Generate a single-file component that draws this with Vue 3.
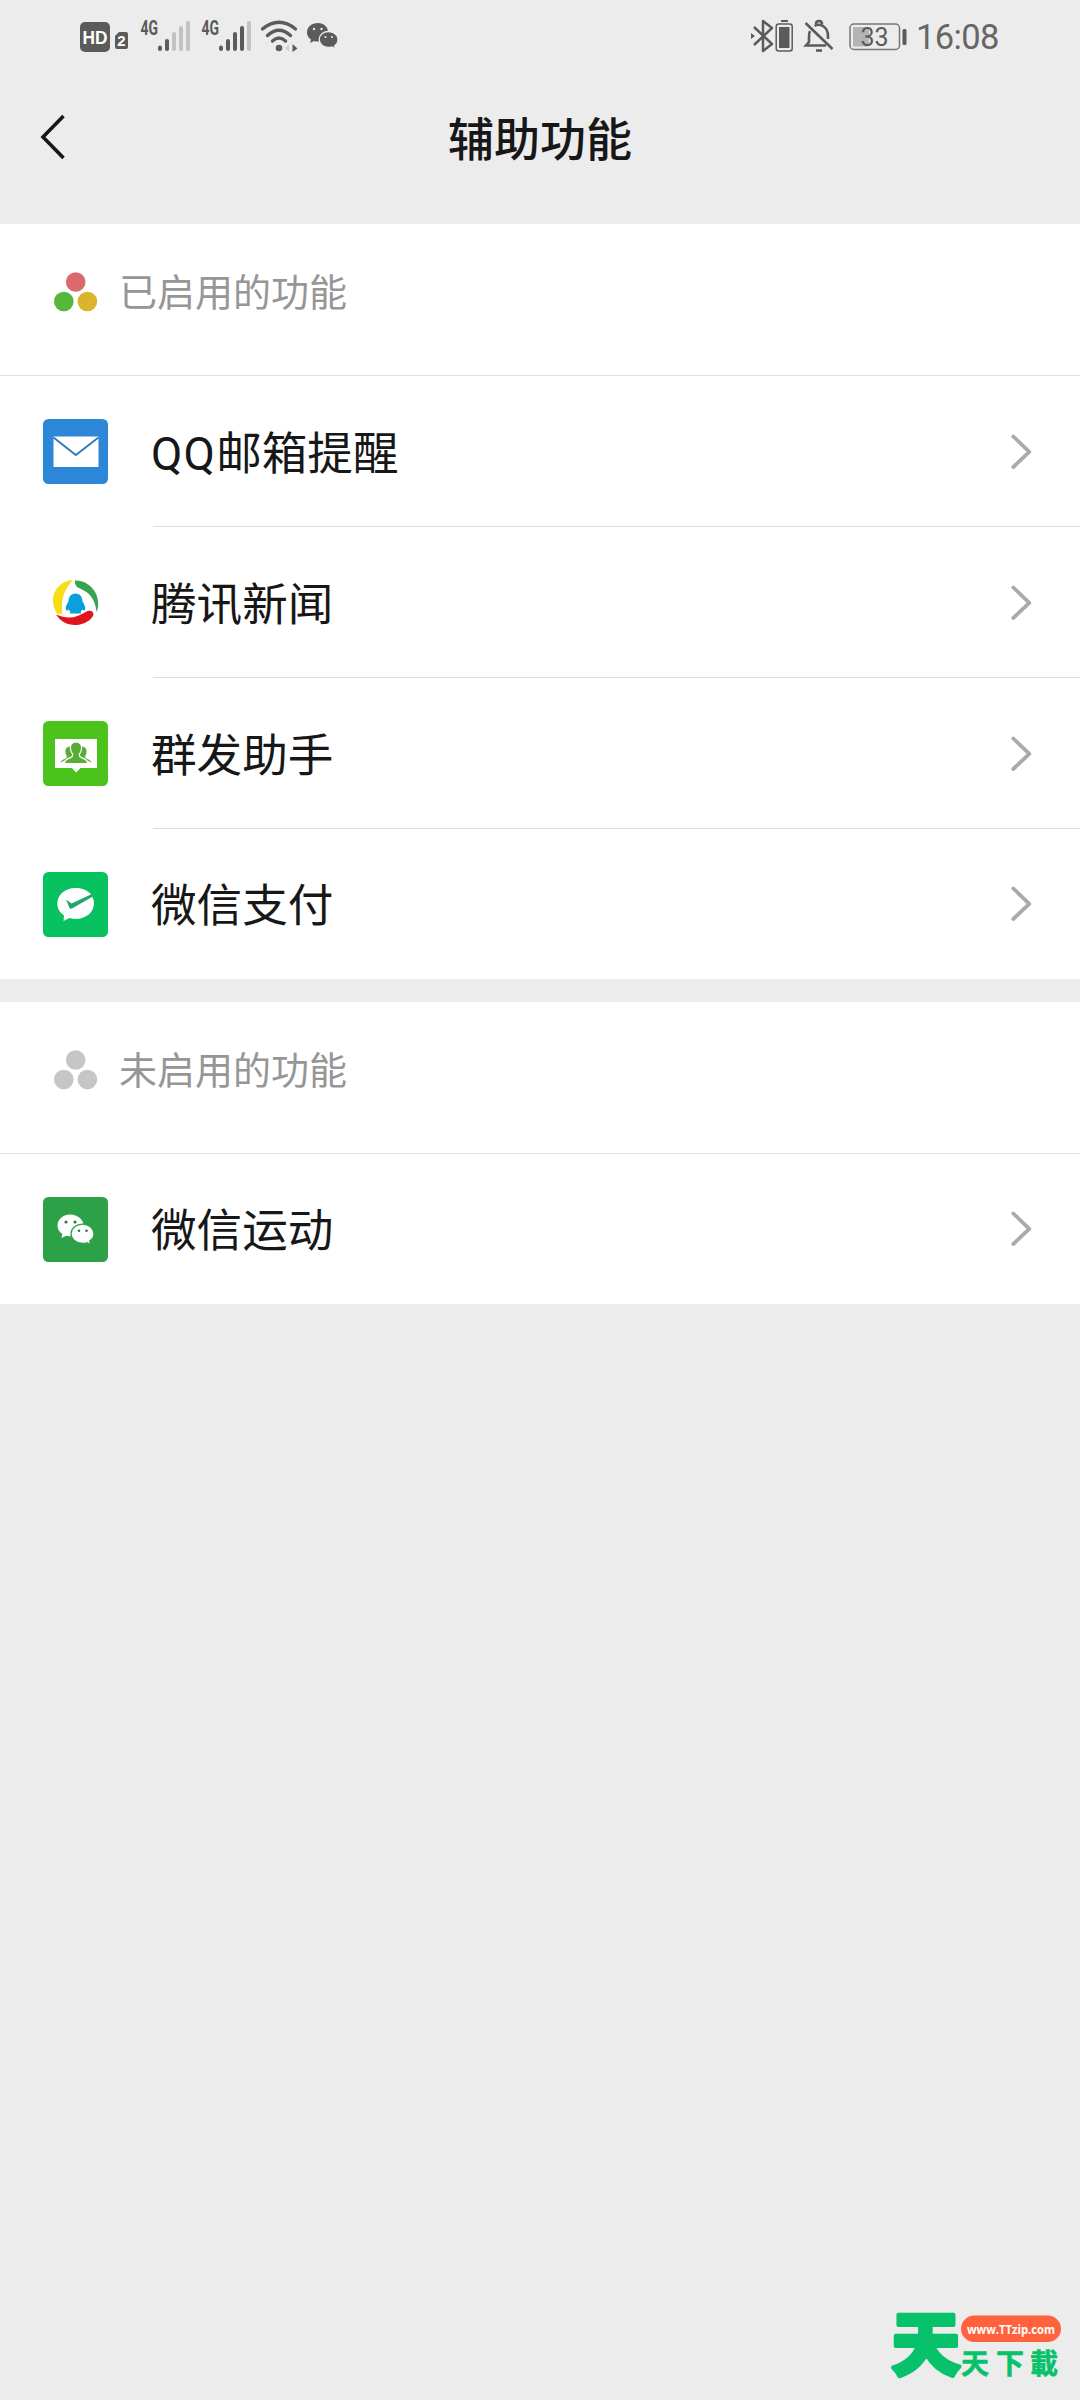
<script setup>
const enabled = [
  { id: 'mail', latin: 'QQ', label: '邮箱提醒' },
  { id: 'news', label: '腾讯新闻' },
  { id: 'group', label: '群发助手' },
  { id: 'pay', label: '微信支付' },
]
const disabled = [{ id: 'sport', label: '微信运动' }]
const sections = [
  { title: '已启用的功能', dots: ['#dc6a6c', '#55b83a', '#dbb42d'], items: enabled },
  { title: '未启用的功能', dots: ['#c6c6c6', '#c6c6c6', '#c6c6c6'], items: disabled },
]
const signals = [2, 4]
</script>

<template>
  <div class="page">
    <div class="status">
      <svg class="hd" width="50" height="32" viewBox="0 0 50 32">
        <rect x="0" y="2" width="30" height="30" rx="5" fill="#5b5b5b" />
        <text x="15" y="24" text-anchor="middle" class="hd-text" textLength="25" lengthAdjust="spacingAndGlyphs">HD</text>
        <path d="M35 16l4-4h7q2 0 2 2v13q0 2-2 2h-9q-2 0-2-2z" fill="#5b5b5b" />
        <text x="41.5" y="26" text-anchor="middle" class="sim-text">2</text>
      </svg>
      <svg v-for="n in signals" :key="n" class="signal" width="52" height="32" viewBox="0 0 52 32">
        <text x="0.5" y="14.500" class="net-text" textLength="17.5" lengthAdjust="spacingAndGlyphs">4G</text>
        <g stroke-width="4" stroke-linecap="round">
          <path v-for="b in 5" :key="b" :d="`M${13 + b * 7} 29V${[27.5, 21, 14, 8, 3][b - 1]}`" :stroke="b <= n ? '#5b5b5b' : '#c2c2c2'" />
        </g>
      </svg>
      <svg class="wifi" width="38" height="32" viewBox="0 0 38 32">
        <g fill="none" stroke="#5b5b5b" stroke-width="3.4" stroke-linecap="round">
          <path d="M2.500 9Q19 -4.500 35.500 9M7.500 15.500Q19 5 30.500 15.500M12.500 21Q19 15 25.500 21" />
        </g>
        <circle cx="19" cy="28" r="3.300" fill="#5b5b5b" />
        <path d="M32.500 24l5 4.500-5 3.500z" fill="#5b5b5b" />
        <path d="M29 24.500l-4 3.500 4 3.500z" fill="#cfcfcf" />
      </svg>
      <svg class="chat" width="32" height="32" viewBox="0 0 32 32">
        <path d="M11 3C4.500 3 0 7 0 12.500c0 3 1.500 5.500 4 7L3 23l4-2c1.500.4 3 .6 4.500.5C17 21 21 17 21 12 21 7 17 3 11 3z" fill="#5b5b5b" />
        <path d="M21.500 11.500c-5 0-9.300 3.500-9.300 8s4.300 8 9.300 8c1.300 0 2.500-.2 3.600-.6L28.500 29l-.8-3.200c2-1.400 3.300-3.600 3.300-6.300 0-4.500-4.500-8-9.500-8z" fill="#5b5b5b" stroke="#ececec" stroke-width="1.300" />
        <g fill="#ececec"><circle cx="7" cy="9" r="1.200" /><circle cx="14.500" cy="9" r="1.200" /><circle cx="18.500" cy="17" r="1" /><circle cx="25" cy="17" r="1" /></g>
      </svg>
      <span class="spacer"></span>
      <svg class="bt" width="42" height="32" viewBox="0 0 42 32">
        <path d="M3 7l18 17-9 7V1l9 7L3 25" fill="none" stroke="#5b5b5b" stroke-width="2.500" stroke-linejoin="round" />
        <path d="M0 13l4 3-4 3z" fill="#5b5b5b" />
        <rect x="25.200" y="4" width="16" height="27" rx="2.500" fill="none" stroke="#5b5b5b" stroke-width="1.500" />
        <rect x="28" y="7" width="10.500" height="21" fill="#5b5b5b" />
        <path d="M30 1h7" stroke="#5b5b5b" stroke-width="2" />
      </svg>
      <svg class="bell" width="30" height="32" viewBox="0 0 30 32">
        <g fill="none" stroke="#5b5b5b" stroke-width="2.600">
          <path d="M1.500 3L28.500 29" />
          <path d="M6 11Q5 13 5 17v5l-3 3.500h20M10.500 6Q14.500 3.500 19 6q5 3 5 10v3" />
          <path d="M12 4q0-3 3-3t3 3" />
          <path d="M12 30.500h6" />
        </g>
      </svg>
      <svg class="battery" width="58" height="32" viewBox="0 0 58 32">
        <rect x="1" y="4" width="49.500" height="25.500" rx="4" fill="none" stroke="#777" stroke-width="1.500" />
        <rect x="4" y="7" width="16" height="19.500" rx="1" fill="#b4b4b4" />
        <rect x="53.500" y="9" width="4" height="16" rx="1.500" fill="#5b5b5b" />
        <text x="25.500" y="25.500" text-anchor="middle" class="battery-text">33</text>
      </svg>
      <span class="clock">16:08</span>
    </div>

    <header class="nav">
      <svg class="back" width="28" height="50" viewBox="0 0 28 50">
        <path d="M25.500 4L5 25l20.500 21" fill="none" stroke="#171717" stroke-width="3.600" />
      </svg>
      <h1>辅助功能</h1>
    </header>

    <section v-for="s in sections" :key="s.title" class="group">
      <div class="head">
        <svg width="44" height="40" viewBox="0 0 44 40">
          <circle cx="21.700" cy="10" r="9.800" :fill="s.dots[0]" />
          <circle cx="9.800" cy="29.500" r="9.800" :fill="s.dots[1]" />
          <circle cx="33.400" cy="29.500" r="9.800" :fill="s.dots[2]" />
        </svg>
        <span>{{ s.title }}</span>
      </div>
      <div v-for="item in s.items" :key="item.id" class="row">
        <svg class="icon" width="65" height="65" viewBox="0 0 65 65">
          <template v-if="item.id === 'mail'">
            <rect width="65" height="65" rx="5.500" fill="#2d87d9" />
            <rect x="10.500" y="17.500" width="45" height="30.500" fill="#fff" />
            <path d="M10.500 18.500L32.800 36 55.500 18.500" fill="none" stroke="#2d78b5" stroke-width="1.800" />
          </template>
          <template v-else-if="item.id === 'news'">
            <path d="M30 10C17 11 9.500 21 10 32c.3 5 2 9 4.500 12l5-.5c-2-12 1-24 10.500-33.500z" fill="#f7dd13" />
            <path d="M32 10.500q-1 6 6 8.500c9 4 14.500 11 15.500 23 2.500-5 2.500-14-2-21C47 14 39 10 32 10.500z" fill="#38a450" />
            <path d="M13 44.500c5 8 14 12 24 10 7-1.500 12-5.500 13.500-10 0-4-4-5-8-2.500-9 6-18 7.500-29.500 2.500z" fill="#e1141e" />
            <path d="M32.500 23.500c-5 0-7 4-7 8-2 3-3.500 6-2.500 8.500.5 1 1.500.5 2.500-.5l2 2.500-1 1.500h12l-1-1.500 2-2.500c1 1 2 1.500 2.500.5.800-2.500-.5-5.500-2.500-8.500 0-4-2-8-7-8z" fill="#0aa0dc" />
          </template>
          <template v-else-if="item.id === 'group'">
            <rect width="65" height="65" rx="5.500" fill="#4cc31c" />
            <path d="M12 18h42v29H37.500L33 51.500 29 47H12z" fill="#fff" />
            <g fill="#58ad38">
              <path d="M28 25.500c-4-.5-6 2.500-5.500 6 .3 2 1 3 1.500 4.500-.5 1.500-3.500 2-6.500 4.500l1 .5 8-3.500 3-3zM38 25.500c4-.5 6 2.500 5.500 6-.3 2-1 3-1.500 4.500.5 1.500 3.500 2 6.500 4.500l-1 .5-8-3.500-3-3z" />
              <path d="M33 21c-4.200 0-6 3-5.500 7 .3 2.500 1 4 2.300 5.200 0 2-.3 2.500-2.300 3.300-3.500 1.500-6 2.500-6 6h23c0-3.500-2.500-4.500-6-6-2-.8-2.300-1.300-2.300-3.300 1.300-1.200 2-2.700 2.300-5.200.5-4-1.300-7-5.500-7z" stroke="#fff" stroke-width="1.200" />
            </g>
          </template>
          <template v-else-if="item.id === 'pay'">
            <rect width="65" height="65" rx="5.500" fill="#08c261" />
            <path d="M32.500 16C22 16 14.300 23 14.300 31.500c0 5 2.500 9 6.700 12L20.500 49l6-3c2 .6 4 1 6 1C43 47 51 40 51 31.500c0-2.500-.8-5-2-7z" fill="#fff" />
            <path d="M32.500 16c7 0 12.500 2.500 15.800 6.800L46 26l-16-9z" fill="#fff" />
            <path d="M23 27.500l5.500 4L49 22v3L29 36.500q-1.800 1-2.700-1z" fill="#22a668" />
          </template>
          <template v-else>
            <rect width="65" height="65" rx="5.500" fill="#2da148" />
            <path d="M27.500 17.500c-7.300 0-13 4.800-13 11 0 3.500 1.700 6.300 4.700 8.300L18.500 41l4.700-2.300q2.200.6 4.500.5C35 39 40.500 34.500 40.500 28.500s-6-11-13-11z" fill="#fff" />
            <path d="M39.500 27.200C33 27.200 28 31.500 28 36.800s5 9.500 11.500 9.500c1.500 0 3-.2 4.300-.6l3.500 1.800-.6-3.500c2.600-1.700 4.300-4.200 4.300-7.200 0-5.300-5-9.600-11.500-9.600z" fill="#fff" stroke="#2da148" stroke-width="1.200" />
            <g fill="#2d7d42"><circle cx="23" cy="25" r="1.600" /><circle cx="32" cy="25" r="1.600" /><circle cx="36" cy="33.700" r="1.300" /><circle cx="43.500" cy="33.700" r="1.300" /></g>
          </template>
        </svg>
        <span class="label"><span v-if="item.latin" class="latin">{{ item.latin }}</span>{{ item.label }}</span>
        <svg class="chevron" width="22" height="38" viewBox="0 0 22 38">
          <path d="M2.300 3.500L18.300 18.800 2.300 34" fill="none" stroke="#aaa" stroke-width="3.800" stroke-linecap="round" stroke-linejoin="round" />
        </svg>
      </div>
    </section>

    <svg class="brand" width="190" height="120" viewBox="-10 -25 190 120">
      <text x="1.500" y="65" class="brand-big">天</text>
      <rect x="71" y="10.500" width="100" height="26.500" rx="13.250" fill="#ff623c" />
      <text x="77" y="28.500" class="brand-url" textLength="88" lengthAdjust="spacingAndGlyphs">www.TTzip.com</text>
      <text x="71 106 140" y="69" class="brand-small">天下載</text>
    </svg>
  </div>
</template>

<style>
body {
  background: #ececec;
}
</style>

<style scoped>
.page {
  position: relative;
  width: 1080px;
  height: 2400px;
  background: #ececec;
  font-family: "Noto Sans CJK SC", sans-serif;
  overflow: hidden;
}
.status {
  display: flex;
  align-items: center;
  height: 72px;
  box-sizing: border-box;
  padding: 0 81px 0 80px;
}
.status svg {
  flex: none;
  overflow: visible;
}
.signal {
  margin-left: 9px;
}
.hd + .signal {
  margin-left: 10px;
}
.wifi {
  margin-left: 7px;
}
.chat {
  margin-left: 9px;
}
.spacer {
  flex: 1;
}
.bell {
  margin-left: 11px;
}
.battery {
  margin-left: 15px;
}
.clock {
  width: 83px;
  margin-left: 9px;
  padding-top: 1px;
  font: 400 34.5px/40px Roboto, sans-serif;
  letter-spacing: -0.6px;
  color: #666;
  white-space: nowrap;
}
.hd-text {
  font: 700 19px "Liberation Sans", sans-serif;
  fill: #fff;
}
.sim-text {
  font: 700 15px "Liberation Sans", sans-serif;
  fill: #fff;
}
.net-text {
  font: 700 20px Roboto, sans-serif;
  fill: #5b5b5b;
}
.battery-text {
  font: 400 25px Roboto, sans-serif;
  fill: #5b5b5b;
}
.nav {
  display: grid;
  grid-template-columns: 38px 1fr 38px;
  align-items: center;
  height: 152px;
}
.back {
  margin: -22px 0 0 38px;
}
.nav h1 {
  margin: 0;
  padding-bottom: 25px;
  font-size: 46px;
  line-height: 60px;
  font-weight: 500;
  text-align: center;
  color: #171717;
}
.group {
  background: #fff;
}
.group + .group {
  margin-top: 23px;
}
.head {
  display: flex;
  align-items: center;
  gap: 21px;
  height: 152px;
  box-sizing: border-box;
  padding: 0 0 16px 54px;
  border-bottom: 1px solid #e2e2e2;
  font-size: 38px;
  line-height: 56px;
  font-weight: 400;
  color: #969696;
}
.head span {
  padding-bottom: 3px;
}
.row {
  position: relative;
  display: flex;
  align-items: center;
  height: 151px;
  box-sizing: border-box;
  padding: 0 47px 0 43px;
}
.row:last-child {
  height: 150px;
}
.row + .row::before {
  content: "";
  position: absolute;
  top: -1px;
  left: 153px;
  right: 0;
  height: 1px;
  background: #dbe0de;
}
.label {
  flex: 1;
  margin-left: 43px;
  padding-top: 6px;
  font-family: Roboto, "Noto Sans CJK SC", sans-serif;
  font-size: 45.6px;
  line-height: 66px;
  color: #171717;
}
.latin {
  letter-spacing: 1.2px;
}
.brand {
  position: absolute;
  left: 880px;
  top: 2280px;
}
.brand-big {
  font: 900 69px "Noto Sans CJK SC", sans-serif;
  fill: #08c26b;
  stroke: #08c26b;
  stroke-width: 4px;
  stroke-linejoin: round;
}
.brand-small {
  font: 700 28px "Noto Sans CJK TC", sans-serif;
  fill: #08c26b;
  stroke: #08c26b;
  stroke-width: 0.6px;
  stroke-linejoin: round;
}
.brand-url {
  font: 700 12.5px "Open Sans", sans-serif;
  fill: #fff;
}
</style>
